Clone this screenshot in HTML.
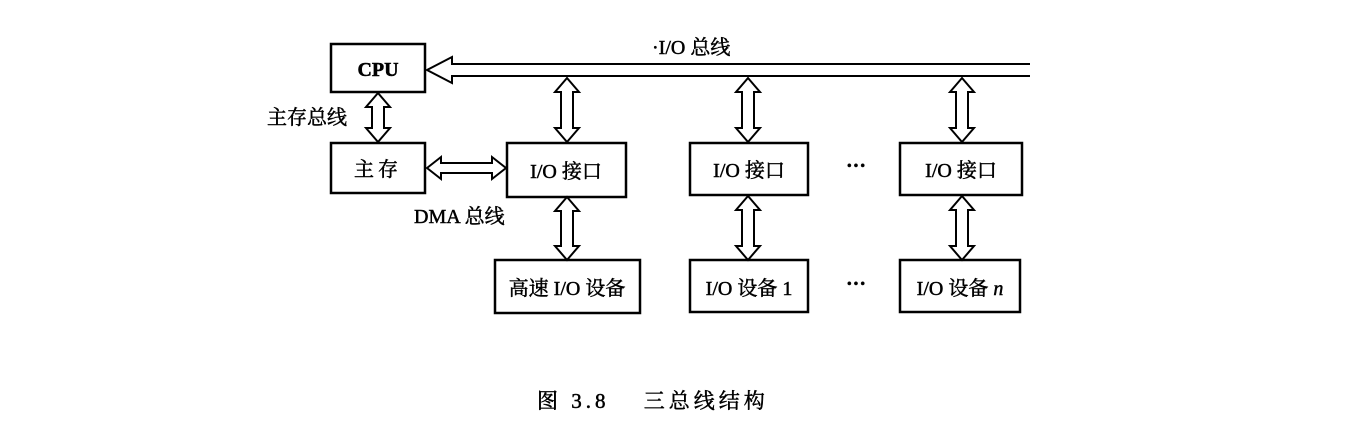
<!DOCTYPE html>
<html><head><meta charset="utf-8"><style>
html,body{margin:0;padding:0;background:#fff;}
svg{display:block;}
text{font-family:"Liberation Serif","Noto Serif CJK SC",serif;fill:#000;stroke:#000;stroke-width:0.5;}
</style></head><body>
<svg width="1354" height="435" viewBox="0 0 1354 435" xmlns="http://www.w3.org/2000/svg">
<g fill="none" stroke="#000" stroke-width="2.5">
<rect x="331" y="44" width="94" height="48"/>
<rect x="331" y="143" width="94" height="50"/>
<rect x="507" y="143" width="119" height="54"/>
<rect x="495" y="260" width="145" height="53"/>
<rect x="690" y="143" width="118" height="52"/>
<rect x="690" y="260" width="118" height="52"/>
<rect x="900" y="143" width="122" height="52"/>
<rect x="900" y="260" width="120" height="52"/>
</g>
<g fill="#fff" stroke="#000" stroke-width="2">
<path d="M1030 64 L452 64 L452 57 L427 70 L452 83 L452 76 L1030 76"/>
<path d="M378 93 L390 107 L384 107 L384 128 L390 128 L378 142 L366 128 L372 128 L372 107 L366 107Z"/>
<path d="M567 78 L579 92 L573 92 L573 128 L579 128 L567 142 L555 128 L561 128 L561 92 L555 92Z"/>
<path d="M567 197 L579 211 L573 211 L573 246 L579 246 L567 260 L555 246 L561 246 L561 211 L555 211Z"/>
<path d="M748 78 L760 92 L754 92 L754 128 L760 128 L748 142 L736 128 L742 128 L742 92 L736 92Z"/>
<path d="M748 196 L760 210 L754 210 L754 246 L760 246 L748 260 L736 246 L742 246 L742 210 L736 210Z"/>
<path d="M962 78 L974 92 L968 92 L968 128 L974 128 L962 142 L950 128 L956 128 L956 92 L950 92Z"/>
<path d="M962 196 L974 210 L968 210 L968 246 L974 246 L962 260 L950 246 L956 246 L956 210 L950 210Z"/>
<path d="M427 168 L441 157 L441 163 L492 163 L492 157 L506 168 L492 179 L492 173 L441 173 L441 179Z"/>
</g>
<g font-size="20">
<text x="378" y="76" text-anchor="middle" font-weight="bold">CPU</text>
<text x="378" y="176" text-anchor="middle" letter-spacing="4">主存</text>
<text x="566" y="178" text-anchor="middle">I/O 接口</text>
<text x="749" y="177" text-anchor="middle">I/O 接口</text>
<text x="961" y="177" text-anchor="middle">I/O 接口</text>
<text x="567" y="295" text-anchor="middle">高速 I/O 设备</text>
<text x="749" y="295" text-anchor="middle">I/O 设备 1</text>
<text x="960" y="295" text-anchor="middle">I/O 设备 <tspan font-style="italic">n</tspan></text>
<text x="652" y="54">·I/O 总线</text>
<text x="267" y="124">主存总线</text>
<text x="414" y="223">DMA 总线</text>
<text x="856" y="172" text-anchor="middle" font-weight="bold">···</text>
<text x="856" y="290" text-anchor="middle" font-weight="bold">···</text>
<text x="537" y="408" font-size="21" letter-spacing="4">图 3.8　 三总线结构</text>
</g>
</svg>
</body></html>
